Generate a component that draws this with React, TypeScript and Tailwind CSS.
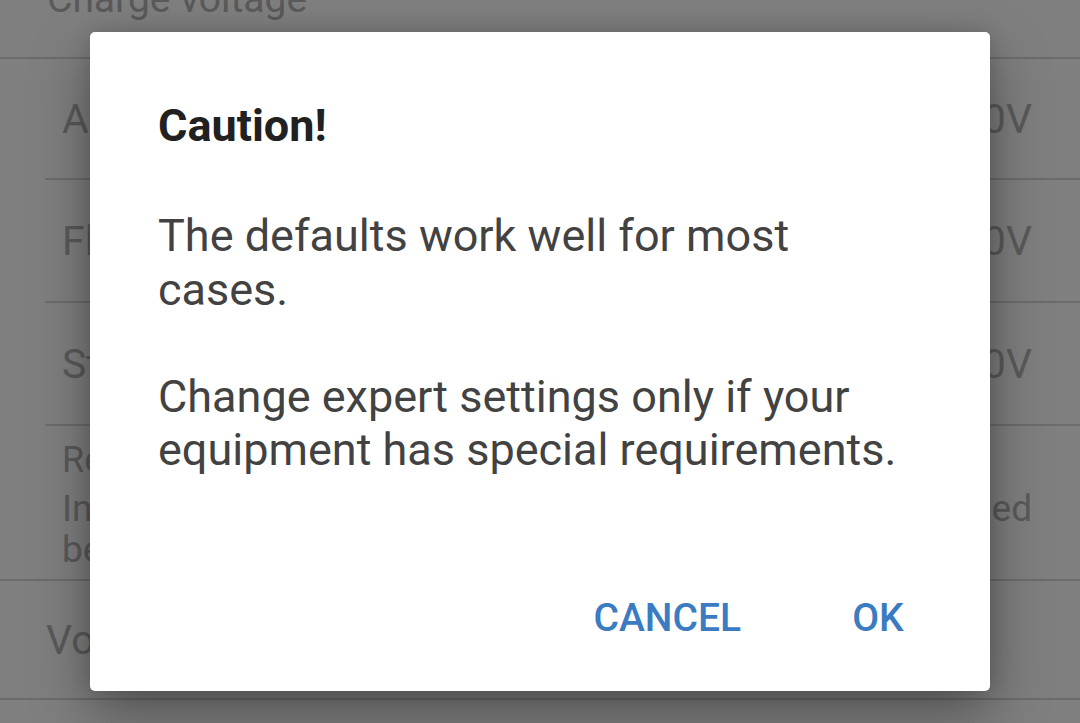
import React from "react";

const ROWS = [
  { label: "Absorption voltage", value: "14.40V", h: "h-[121px]" },
  { label: "Float voltage", value: "13.80V", h: "h-[123px]" },
  { label: "Storage voltage", value: "13.50V", h: "h-[123px]" },
];

function SettingsList() {
  return (
    <div className="flex flex-col bg-white text-[#b4b4b4]">
      {/* section header, scrolled mostly out of view */}
      <div className="-mt-[40px] h-[99px] flex items-end pb-[35px] pl-[47px] border-b-2 border-[#d8d8d8]">
        <span className="text-[39px] leading-[46px]">Charge voltage</span>
      </div>

      {ROWS.map((row) => (
        <div
          key={row.label}
          className={`ml-[45px] ${row.h} flex items-center justify-between pl-[17px] pr-[48px] border-b-2 border-[#d8d8d8]`}
        >
          <span className="text-[41px] leading-[48px]">{row.label}</span>
          <span className="text-[41px] leading-[48px]">{row.value}</span>
        </div>
      ))}

      <div className="h-[155px] pt-[14px] pl-[62px] pr-[48px] border-b-2 border-[#d8d8d8]">
        <div className="text-[36px] leading-[41px]">Re-bulk voltage offset</div>
        <div className="mt-[7px] text-[37px] leading-[41px]">
          <span className="block whitespace-nowrap [text-align-last:justify]">
            In case the voltage drops, a new cycle is used
          </span>
          <span className="block whitespace-nowrap">below the float voltage.</span>
        </div>
      </div>

      <div className="h-[119px] flex items-center pl-[46px] border-b-2 border-[#d8d8d8]">
        <span className="text-[41px] leading-[48px]">Voltage compensation</span>
      </div>

      <div className="h-[120px]" />
    </div>
  );
}

function CautionDialog() {
  return (
    <div className="w-[900px] h-[659px] bg-white rounded-[5px] shadow-[0_24px_60px_rgba(0,0,0,0.35),0_0_20px_rgba(0,0,0,0.15)] flex flex-col">
      <div className="pt-[67px] px-[68px]">
        <h2 className="text-[45px] leading-[54px] font-bold text-[#212121]">Caution!</h2>
        <p className="mt-[56px] text-[45px] leading-[53.5px] text-[#424242]">
          The defaults work well for most cases.
          <br />
          <br />
          Change expert settings only if your equipment has special requirements.
        </p>
      </div>
      <div className="mt-auto mb-[49px] flex justify-end gap-[27px] pr-[24px]">
        <button className="min-w-[176px] px-[22px] text-center text-[39px] leading-[48px] font-medium text-[#3b7bc1]">
          CANCEL
        </button>
        <button className="min-w-[176px] px-[22px] text-center text-[39px] leading-[48px] font-medium text-[#3b7bc1]">
          OK
        </button>
      </div>
    </div>
  );
}

export default function App() {
  return (
    <div className="relative w-[1080px] h-[723px] overflow-hidden bg-white font-['Roboto',sans-serif]">
      <SettingsList />
      <div className="absolute inset-0 bg-black/50 flex items-center justify-center">
        <CautionDialog />
      </div>
    </div>
  );
}
